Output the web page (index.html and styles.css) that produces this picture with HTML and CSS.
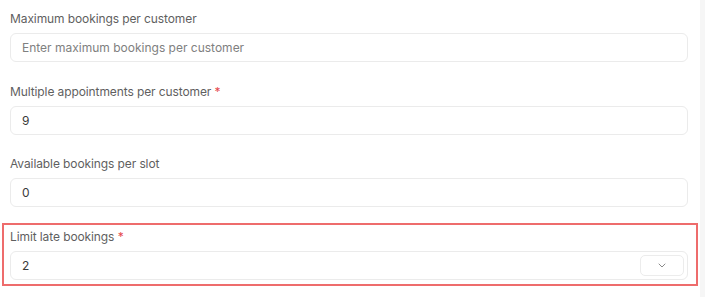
FILE: index.html
```html
<!DOCTYPE html>
<html lang="en">
<head>
    <meta charset="UTF-8">
    <meta name="viewport" content="width=device-width, initial-scale=1.0">
    <title>Booking limits</title>
    <link rel="stylesheet" href="styles.css">
</head>
<body>
    <div class="page">
        <form class="settings-form">
            <div class="field">
                <label for="maxBookings">Maximum bookings per customer</label>
                <input type="text" id="maxBookings" placeholder="Enter maximum bookings per customer">
            </div>

            <div class="field">
                <label for="multiAppointments">Multiple appointments per customer <span class="required">*</span></label>
                <input type="text" id="multiAppointments" value="9">
            </div>

            <div class="field">
                <label for="slotBookings">Available bookings per slot</label>
                <input type="text" id="slotBookings" value="0">
            </div>

            <div class="field highlighted">
                <label for="lateBookings">Limit late bookings <span class="required">*</span></label>
                <div class="select-box">
                    <span class="select-value" id="lateBookings">2</span>
                    <button type="button" class="select-toggle">
                        <svg width="8" height="5" viewBox="0 0 8 5">
                            <path d="M1 1l3 3 3-3" fill="none" stroke="#8a8a8a" stroke-width="1" stroke-linecap="round" stroke-linejoin="round"/>
                        </svg>
                    </button>
                </div>
            </div>
        </form>
        <div class="scroll-track"></div>
    </div>
</body>
</html>
```

FILE: styles.css
```css
* {
    margin: 0;
    padding: 0;
    box-sizing: border-box;
    font-family: Inter, 'Noto Sans', sans-serif;
}

body {
    background-color: #fff;
    color: #333;
}

.page {
    display: flex;
    min-height: 297px;
}

.settings-form {
    flex: 0 0 700px;
    display: flex;
    flex-direction: column;
    gap: 9.5px;
    padding: 5px 2px 0 2px;
}

.field {
    display: flex;
    flex-direction: column;
    gap: 6px;
    padding: 4px 8px 4px 6px;
    border: 2px solid transparent;
}

.field.highlighted {
    border-color: #ee6c6c;
}

.field label {
    font-size: 12px;
    line-height: 16px;
    color: #5f5f5f;
    letter-spacing: -0.1px;
}

.required {
    color: #e5484d;
}

.field input,
.select-box {
    height: 29px;
    width: 100%;
    border: 1px solid #ebebeb;
    border-radius: 6px;
    background-color: #fff;
    padding: 0 11px;
    font-size: 12px;
    color: #3a3a3a;
    outline: none;
}

.field input::placeholder {
    color: #808080;
}

.select-box {
    display: flex;
    align-items: center;
    justify-content: space-between;
    padding-right: 3px;
}

.select-toggle {
    width: 44px;
    height: 21px;
    border: 1px solid #ececec;
    border-radius: 5px;
    background-color: #fff;
    display: flex;
    align-items: center;
    justify-content: center;
    cursor: pointer;
}

.scroll-track {
    flex: 1;
    background-color: #f6f6f6;
}
```
